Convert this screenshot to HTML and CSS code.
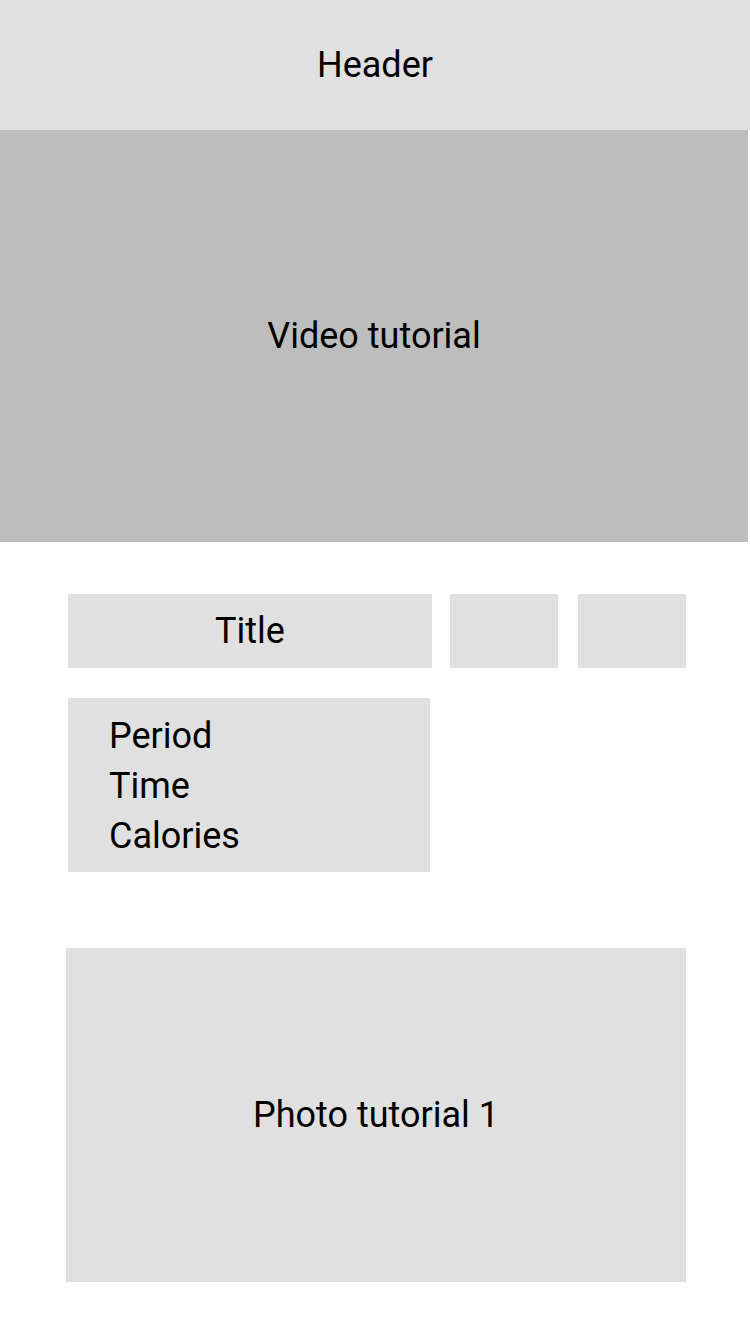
FILE: index.html
```html
<!DOCTYPE html>
<html lang="en">
<head>
    <meta charset="UTF-8">
    <meta name="viewport" content="width=device-width, initial-scale=1.0">
    <title>Workout Tutorial</title>
    <link rel="stylesheet" href="styles.css">
</head>
<body>
    <header class="header">Header</header>

    <section class="video">Video tutorial</section>

    <main class="content">
        <div class="title-row">
            <div class="title">Title</div>
            <div class="action"></div>
            <div class="action action-last"></div>
        </div>

        <div class="info">
            <p>Period</p>
            <p>Time</p>
            <p>Calories</p>
        </div>

        <div class="photo">Photo tutorial 1</div>
    </main>
</body>
</html>
```

FILE: styles.css
```css
body {
    margin: 0;
    background: #fff;
    font-family: Roboto, "Noto Sans", sans-serif;
    font-size: 36px;
    color: #000;
}

.header {
    height: 130px;
    background-color: #e0e0e0;
    display: flex;
    align-items: center;
    justify-content: center;
}

.video {
    width: 748px;
    height: 412px;
    background-color: #bdbdbd;
    display: flex;
    align-items: center;
    justify-content: center;
}

.content {
    padding: 52px 0 0 68px;
}

.title-row {
    display: flex;
    height: 74px;
}

.title {
    width: 364px;
    background-color: #e0e0e0;
    display: flex;
    align-items: center;
    justify-content: center;
}

.action {
    width: 108px;
    margin-left: 18px;
    background-color: #e0e0e0;
}

.action-last {
    margin-left: 20px;
}

.info {
    width: 321px;
    height: 161px;
    margin-top: 30px;
    padding: 13px 0 0 41px;
    background-color: #e0e0e0;
}

.info p {
    margin: 0;
    line-height: 50px;
}

.photo {
    width: 620px;
    height: 334px;
    margin: 76px 0 0 -2px;
    background-color: #e0e0e0;
    display: flex;
    align-items: center;
    justify-content: center;
}
```
